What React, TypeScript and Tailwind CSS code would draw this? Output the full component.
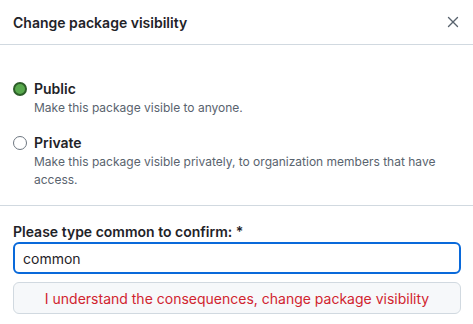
import { X } from "lucide-react";

const Radio = ({ checked }: { checked: boolean }) =>
  checked ? (
    <span className="mt-[3px] h-[14px] w-[14px] shrink-0 rounded-full border-2 border-[#2d5e29] bg-[#58a94d]" />
  ) : (
    <span className="mt-[3px] h-[14px] w-[14px] shrink-0 rounded-full border border-[#6e7781] bg-white" />
  );

const Option = ({ checked, label, desc }: { checked: boolean; label: string; desc: string }) => (
  <label className="flex gap-[7px]">
    <Radio checked={checked} />
    <div className="flex flex-col">
      <span className="text-[14px] leading-5 font-semibold text-[#1f2328]">{label}</span>
      <span className="text-[12px] leading-[18px] text-[#59636e]">{desc}</span>
    </div>
  </label>
);

export default function App() {
  return (
    <div className="h-[324px] w-[473px] overflow-hidden bg-white font-['Inter',sans-serif] text-[#1f2328]">
      {/* header */}
      <div className="flex h-[45px] items-center justify-between border-b border-[#d1d9e0] pl-[13px] pr-[11px]">
        <h1 className="text-[14px] font-semibold">Change package visibility</h1>
        <X size={18} strokeWidth={1.8} className="text-[#59636e]" />
      </div>

      {/* options */}
      <div className="flex flex-col gap-4 border-b border-[#d1d9e0] pt-[34px] pb-[16px] pl-[13px] pr-[12px]">
        <Option checked label="Public" desc="Make this package visible to anyone." />
        <Option
          checked={false}
          label="Private"
          desc="Make this package visible privately, to organization members that have access."
        />
      </div>

      {/* confirm */}
      <div className="flex flex-col pt-[16px] pl-[13px] pr-[12px]">
        <label className="text-[14px] leading-5 font-semibold">Please type common to confirm: *</label>
        <input
          readOnly
          value="common"
          className="h-[32px] rounded-[6px] border-2 border-[#0969da] px-[8px] text-[14px] text-[#1f2328] outline-none"
        />
        <button className="mt-[8px] h-[32px] rounded-[6px] border border-[#d1d9e0] bg-[#f6f8fa] text-[14px] text-[#d1242f]">
          I understand the consequences, change package visibility
        </button>
      </div>
    </div>
  );
}
